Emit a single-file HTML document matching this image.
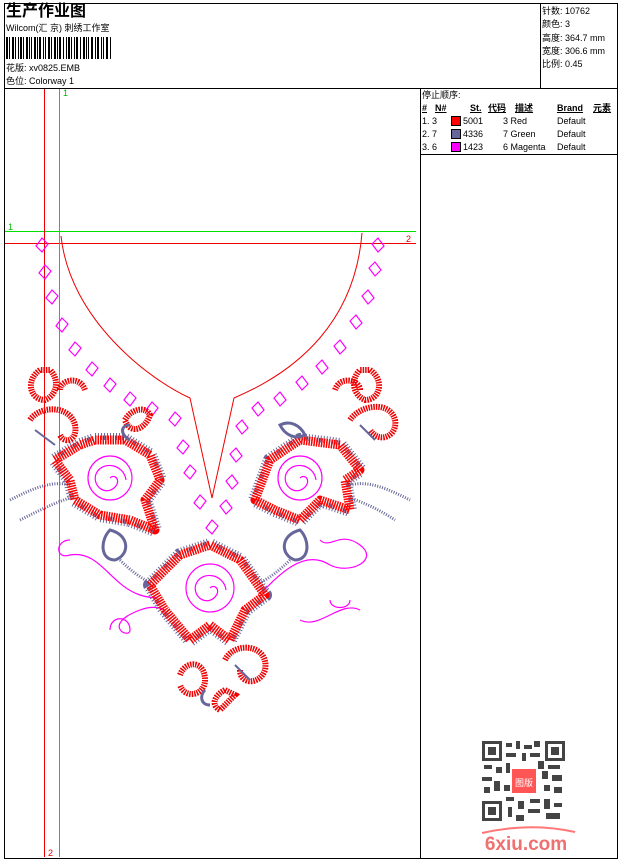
<!DOCTYPE html>
<html><head><meta charset="utf-8">
<style>
body{margin:0;background:#fff;width:620px;height:860px;position:relative;overflow:hidden;font-family:"Liberation Sans","Noto Sans CJK SC",sans-serif;color:#000}
.a{position:absolute}
.t{font-size:9px;line-height:12px;white-space:nowrap}
</style></head><body>
<div class="a" style="left:4px;top:3px;width:612px;height:854px;border:1px solid #000"></div>
<div class="a" style="left:4px;top:88px;width:613px;height:1px;background:#000"></div>
<div class="a" style="left:540px;top:3px;width:1px;height:85px;background:#000"></div>
<div class="a" style="left:420px;top:88px;width:1px;height:770px;background:#000"></div>
<div class="a" style="left:420px;top:154px;width:197px;height:1px;background:#000"></div>

<div class="a" style="left:6px;top:2px;font-size:16px;font-weight:bold;line-height:20px">生产作业图</div>
<div class="a t" style="left:6px;top:22px">Wilcom(汇 京) 刺绣工作室</div>
<svg class="a" style="left:6px;top:37px" width="106" height="22">
<g fill="#000">
<rect x="0" y="0" width="2" height="22"/><rect x="3" y="0" width="1" height="22"/><rect x="6" y="0" width="2" height="22"/><rect x="9" y="0" width="1" height="22"/><rect x="12" y="0" width="1" height="22"/><rect x="14" y="0" width="2" height="22"/><rect x="17" y="0" width="1" height="22"/><rect x="20" y="0" width="2" height="22"/><rect x="23" y="0" width="1" height="22"/><rect x="25" y="0" width="1" height="22"/><rect x="28" y="0" width="2" height="22"/><rect x="31" y="0" width="1" height="22"/><rect x="33" y="0" width="2" height="22"/><rect x="37" y="0" width="1" height="22"/><rect x="39" y="0" width="1" height="22"/><rect x="42" y="0" width="2" height="22"/><rect x="45" y="0" width="1" height="22"/><rect x="48" y="0" width="2" height="22"/><rect x="51" y="0" width="1" height="22"/><rect x="53" y="0" width="2" height="22"/><rect x="57" y="0" width="1" height="22"/><rect x="60" y="0" width="1" height="22"/><rect x="62" y="0" width="2" height="22"/><rect x="65" y="0" width="1" height="22"/><rect x="68" y="0" width="1" height="22"/><rect x="70" y="0" width="2" height="22"/><rect x="74" y="0" width="1" height="22"/><rect x="77" y="0" width="2" height="22"/><rect x="80" y="0" width="1" height="22"/><rect x="82" y="0" width="1" height="22"/><rect x="85" y="0" width="2" height="22"/><rect x="89" y="0" width="1" height="22"/><rect x="91" y="0" width="2" height="22"/><rect x="95" y="0" width="1" height="22"/><rect x="97" y="0" width="1" height="22"/><rect x="100" y="0" width="2" height="22"/><rect x="104" y="0" width="1" height="22"/>
</g></svg>
<div class="a t" style="left:6px;top:62px">花版: xv0825.EMB</div>
<div class="a t" style="left:6px;top:75px">色位: Colorway 1</div>

<div class="a t" style="left:542px;top:5px;line-height:13.3px">针数: 10762<br>颜色: 3<br>高度: 364.7 mm<br>宽度: 306.6 mm<br>比例: 0.45</div>

<div class="a t" style="left:422px;top:89px">停止顺序:</div>
<div class="a t" style="left:422px;top:102px;font-weight:bold;text-decoration:underline">#</div>
<div class="a t" style="left:435px;top:102px;font-weight:bold;text-decoration:underline">N#</div>
<div class="a t" style="left:470px;top:102px;font-weight:bold;text-decoration:underline">St.</div>
<div class="a t" style="left:488px;top:102px;font-weight:bold;text-decoration:underline">代码</div>
<div class="a t" style="left:515px;top:102px;font-weight:bold;text-decoration:underline">描述</div>
<div class="a t" style="left:557px;top:102px;font-weight:bold;text-decoration:underline">Brand</div>
<div class="a t" style="left:593px;top:102px;font-weight:bold;text-decoration:underline">元素</div>
<div class="a t" style="left:422px;top:115px;line-height:13px">1. 3<br>2. 7<br>3. 6</div>
<div class="a" style="left:451px;top:116px;width:8px;height:8px;border:1px solid #000;background:#f00"></div>
<div class="a" style="left:451px;top:129px;width:8px;height:8px;border:1px solid #000;background:#66669a"></div>
<div class="a" style="left:451px;top:142px;width:8px;height:8px;border:1px solid #000;background:#f0f"></div>
<div class="a t" style="left:463px;top:115px;line-height:13px">5001<br>4336<br>1423</div>
<div class="a t" style="left:503px;top:115px;line-height:13px">3 Red<br>7 Green<br>6 Magenta</div>
<div class="a t" style="left:557px;top:115px;line-height:13px">Default<br>Default<br>Default</div>

<svg class="a" style="left:0;top:0" width="620" height="860">
<line x1="5" y1="231.5" x2="416" y2="231.5" stroke="#0d0"/>
<line x1="5" y1="243.5" x2="416" y2="243.5" stroke="#e00"/>
<line x1="44.5" y1="89" x2="44.5" y2="857" stroke="#e00"/>
<line x1="59.5" y1="89" x2="59.5" y2="857" stroke="#0d0"/>
<text x="63" y="96" font-size="9" fill="#0b0" font-family="Liberation Sans">1</text>
<text x="8" y="230" font-size="9" fill="#0b0" font-family="Liberation Sans">1</text>
<text x="406" y="242" font-size="9" fill="#e00" font-family="Liberation Sans">2</text>
<text x="48" y="856" font-size="9" fill="#e00" font-family="Liberation Sans">2</text>
<path d="M61 236 C70 320 150 380 190 398 L212 498 L234 398 C300 370 355 320 362 233" fill="none" stroke="#e00"/>
<g fill="none" stroke="#f0f" stroke-width="1.2">
<path d="M42 238l6 6-6 8-6-6z M45 265l6 6-6 8-6-6z M52 290l6 6-6 8-6-6z M62 318l6 6-6 8-6-6z M75 342l6 6-6 8-6-6z M92 362l6 6-6 8-6-6z M110 378l6 6-6 8-6-6z M130 392l6 6-6 8-6-6z M152 402l6 6-6 8-6-6z M175 412l6 6-6 8-6-6z M183 440l6 6-6 8-6-6z M190 465l6 6-6 8-6-6z M200 495l6 6-6 8-6-6z M212 520l6 6-6 8-6-6z"/>
<path d="M378 238l-6 6 6 8 6-6z M375 262l-6 6 6 8 6-6z M368 290l-6 6 6 8 6-6z M356 315l-6 6 6 8 6-6z M340 340l-6 6 6 8 6-6z M322 360l-6 6 6 8 6-6z M302 376l-6 6 6 8 6-6z M280 392l-6 6 6 8 6-6z M258 402l-6 6 6 8 6-6z M242 420l-6 6 6 8 6-6z M236 448l-6 6 6 8 6-6z M232 475l-6 6 6 8 6-6z M226 500l-6 6 6 8 6-6z"/>
<path d="M70 540c-15 0-15 20 0 15 30-5 40 30 70 40 30 10 60-10 70-30 M110 630c0-15 20-15 20 0 0 10-30-5 10-20 40-15 40 40 70 10 M320 540c10 10 20 -10 40 5c20 15-10 30 -30 20c-30-20-60 20-80 40 M350 600c0 10 -20 10-20 0 M300 620c20 10 40-20 60-10"/>
</g>
<g fill="none" stroke="#66669a" stroke-width="3" stroke-dasharray="1 1.5">
<path d="M10 500 C30 490 50 480 70 485 M20 520 C40 510 60 500 80 495 M350 485 C370 480 390 490 410 500 M340 495 C360 500 380 510 395 520 M120 560 C140 580 160 590 180 590 M290 560 C270 580 250 590 235 590"/>
</g>
<g fill="#fff" stroke-linejoin="round">
<g stroke="#66669a" stroke-width="14" stroke-dasharray="1 2">
<path d="M55 460 L80 445 L95 440 L125 440 L150 455 L160 480 L145 500 L155 530 L130 520 L100 515 L75 500 L70 480 Z"/>
<path d="M255 500 L270 460 L300 440 L340 445 L360 470 L345 480 L350 510 L320 500 L300 520 L275 510 Z"/>
<path d="M150 585 L180 555 L210 545 L240 560 L265 595 L245 610 L230 640 L210 625 L190 640 L165 610 Z"/>
</g>
<g stroke="#f00" stroke-width="9" stroke-dasharray="1.5 1">
<path d="M55 460 L80 445 L95 440 L125 440 L150 455 L160 480 L145 500 L155 530 L130 520 L100 515 L75 500 L70 480 Z"/>
<path d="M255 500 L270 460 L300 440 L340 445 L360 470 L345 480 L350 510 L320 500 L300 520 L275 510 Z"/>
<path d="M150 585 L180 555 L210 545 L240 560 L265 595 L245 610 L230 640 L210 625 L190 640 L165 610 Z"/>
</g>
</g>
<g fill="none" stroke="#f0f" stroke-width="1.2">
<circle cx="110" cy="478" r="22"/><circle cx="300" cy="478" r="22"/><circle cx="210" cy="588" r="24"/>
<path d="M110 478c5-5 12 3 4 10-10 8-22-3-18-14 6-14 28-10 30 6 M300 478c5-5 12 3 4 10-10 8-22-3-18-14 6-14 28-10 30 6 M210 588c5-5 12 3 4 10-10 8-22-3-18-14 6-14 28-10 30 6"/>
</g>
<g stroke-width="6" fill="none" stroke="#e00" stroke-dasharray="1.5 1">
<path d="M40 370 c-15 10-10 30 5 30 c12-5 15-20 5-30 z M370 370 c15 10 10 30 -5 30 c-12-5 -15-20 -5-30z M125 420 c5 -10 20-15 25 -5 c-5 15-20 20-25 5z M225 690 c-10 5-15 15-5 20 l15-15z"/>
<path d="M60 390 c0-10 20-15 25 0 M360 390 c0-10 -20-15 -25 0 M180 675 c5-15 25-15 25 5 c0 15-20 20-25 5"/>
<path d="M30 420 c10-15 40-15 45 5 c3 15-10 20-15 10 M350 420 c10-15 40-20 45 0 c3 15-15 25-25 10 M225 660 c10-20 45-15 40 10 c-5 15-25 15-25 0"/>
</g>
<g fill="none" stroke="#66669a" stroke-width="3">
<path d="M110 530 c-10 10-10 30 5 30 c15-5 15-25-5-30z M300 530 c10 10 10 30 -5 30 c-15-5-15-25 5-30z M280 425 c10-5 20 0 25 10 c-10 5-20 0-25-10z M130 425 c-10 0-10 10 0 15 M205 690 c-5 5-5 15 5 15"/>
<path d="M35 430 l20 15 M360 425 l15 15 M235 665 l15 15" stroke-width="2"/>
</g>
<g transform="translate(482 741)">
<rect width="83" height="80" fill="#fff"/>
<g fill="#444"><rect x="0" y="0" width="20" height="20"/><rect x="63" y="0" width="20" height="20"/><rect x="0" y="60" width="20" height="20"/></g>
<g fill="#fff"><rect x="3" y="3" width="14" height="14"/><rect x="66" y="3" width="14" height="14"/><rect x="3" y="63" width="14" height="14"/></g>
<g fill="#444"><rect x="6" y="6" width="8" height="8"/><rect x="69" y="6" width="8" height="8"/><rect x="6" y="66" width="8" height="8"/>
<path d="M24 2h6v4h-6zM34 0h4v8h-4zM42 4h8v4h-8zM52 0h6v6h-6zM24 12h10v4h-10zM40 12h4v8h-4zM48 12h10v4h-10zM2 24h8v4h-8zM14 26h6v6h-6zM24 22h4v10h-4zM66 24h12v4h-12zM60 30h6v8h-6zM70 34h10v6h-10zM0 36h10v4h-10zM12 40h6v10h-6zM2 46h6v6h-6zM62 44h6v6h-6zM72 46h8v6h-8zM24 56h8v4h-8zM36 60h6v8h-6zM48 58h10v4h-10zM62 58h6v10h-6zM72 62h8v4h-8zM26 66h4v10h-4zM46 68h12v4h-12zM64 72h14v6h-14zM34 74h8v6h-8zM22 44h6v6h-6zM56 20h6v8h-6z"/></g>
<rect x="30" y="28" width="24" height="24" fill="#f55"/>
<text x="42" y="45" font-size="9" fill="#fff" text-anchor="middle" font-family="Noto Sans CJK SC">图版</text>
</g>
<path d="M482 833 Q530 822 575 832" fill="none" stroke="#f77" stroke-width="2"/>
<text x="526" y="850" font-size="19" font-weight="bold" fill="#f07070" text-anchor="middle" font-family="Liberation Sans">6xiu.com</text>
</svg>
</body></html>
